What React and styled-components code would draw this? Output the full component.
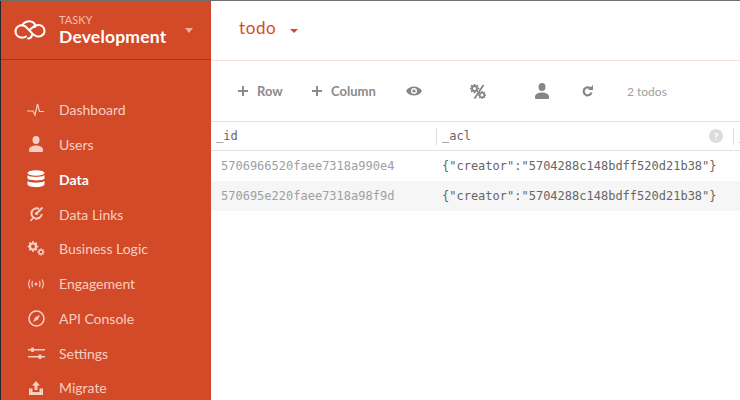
import React from 'react'
import styled, { createGlobalStyle } from 'styled-components'

const GlobalStyle = createGlobalStyle`
  html, body {
    margin: 0;
    padding: 0;
    background: #fff;
    font-family: "Lato", "Open Sans", sans-serif;
  }
`

const LogoIcon = () => (
  <svg width="32" height="20" viewBox="0 0 32 20" fill="none" stroke="#fff" strokeWidth="2" strokeLinecap="round">
    <path d="M12 16.500 C8 19 2 17 1.500 12 C1 7 6 4.500 9.500 5.500 C13 6.500 17 13.500 21 15.500 C25 18 30.500 15.500 30.500 11 C30.500 7 27 4.500 24 5 C21 5.500 18 7.500 15.500 10" />
    <path d="M8.500 5.500 C9.500 1.500 17 -0.500 20.500 3.500 L21 7" />
    <path d="M14 18.500 C16 18.500 17.500 17.500 18 15" />
  </svg>
)

const Pulse = () => (
  <svg width="18" height="14" viewBox="0 0 18 14" fill="none" stroke="currentColor" strokeWidth="1.200">
    <path d="M0 8 H6 L8 12 L10.500 1 L12.500 8.500 H17" />
  </svg>
)

const Person = ({ size = 14 }) => (
  <svg width={size} height={size * 1.15} viewBox="0 0 14 16" fill="currentColor">
    <ellipse cx="7" cy="4" rx="3.500" ry="4" />
    <path d="M1 16 C0 16 0 15 0 14 C0 11 3 9.500 7 9.500 C11 9.500 14 11 14 14 C14 15 14 16 13 16 Z" />
  </svg>
)

const Database = () => (
  <svg width="18" height="18" viewBox="0 0 18 18" fill="currentColor">
    <ellipse cx="9" cy="3" rx="8.500" ry="2.800" />
    <path d="M0.500 5 C2 7.500 16 7.500 17.500 5 V8.500 C16 11 2 11 0.500 8.500 Z" />
    <path d="M0.500 10.800 C2 13.300 16 13.300 17.500 10.800 V14.500 C16 18 2 18 0.500 14.500 Z" />
  </svg>
)

const LinkDial = () => (
  <svg width="15" height="16" viewBox="0 0 15 16" fill="none" stroke="currentColor" strokeWidth="2">
    <path d="M10 2.800 A5.200 5.200 0 1 0 12.800 8" />
    <path d="M7.500 7.500 L13.500 1.500" strokeWidth="2" />
    <path d="M4 12 L1.500 15" strokeWidth="1.600" />
    <circle cx="7.500" cy="7.500" r="1.600" fill="currentColor" stroke="none" />
  </svg>
)

const gearTeeth = (cx, cy, r) => {
  const teeth = [0, 45, 90, 135, 180, 225, 270, 315]
  return teeth.map((a) => {
    const x = cx + Math.cos((a * Math.PI) / 180) * r
    const y = cy + Math.sin((a * Math.PI) / 180) * r
    return <circle key={a} cx={x} cy={y} r={r * 0.24} />
  })
}

const Gears = () => (
  <svg width="18" height="15" viewBox="0 0 18 15" fill="currentColor">
    {gearTeeth(6, 5.500, 4.400)}
    <circle cx="6" cy="5.500" r="3" fill="none" stroke="currentColor" strokeWidth="2.200" />
    {gearTeeth(14, 11, 3)}
    <circle cx="14" cy="11" r="2" fill="none" stroke="currentColor" strokeWidth="1.500" />
  </svg>
)

const Signal = () => (
  <svg width="16" height="10" viewBox="0 0 16 10" fill="none" stroke="currentColor" strokeWidth="1.200">
    <path d="M2 0.500 C0.500 3 0.500 7 2 9.500" />
    <path d="M4.500 2 C3.700 4 3.700 6 4.500 8" />
    <path d="M11.500 2 C12.300 4 12.300 6 11.500 8" />
    <path d="M14 0.500 C15.500 3 15.500 7 14 9.500" />
    <circle cx="8" cy="5" r="1.500" fill="currentColor" stroke="none" />
  </svg>
)

const Compass = () => (
  <svg width="17" height="17" viewBox="0 0 17 17" fill="none" stroke="currentColor" strokeWidth="1.600">
    <circle cx="8.500" cy="8.500" r="7.500" />
    <path d="M12 5 L9.800 9.800 L5 12 L7.200 7.200 Z" fill="currentColor" stroke="none" />
  </svg>
)

const Sliders = () => (
  <svg width="17" height="13" viewBox="0 0 17 13" fill="currentColor">
    <rect x="0" y="2" width="17" height="1.500" />
    <rect x="3" y="0.500" width="3" height="4.500" rx="1" />
    <rect x="0" y="9" width="17" height="1.500" />
    <rect x="10.500" y="7.500" width="3" height="4.500" rx="1" />
  </svg>
)

const Upload = () => (
  <svg width="14" height="14" viewBox="0 0 14 14" fill="currentColor">
    <path d="M7 0 L11 4.500 H8.500 V9 H5.500 V4.500 H3 Z" />
    <path d="M0 7.500 H3.500 V11 H10.500 V7.500 H14 V14 H0 Z" />
  </svg>
)

const Plus = () => (
  <svg width="10" height="10" viewBox="0 0 10 10" fill="currentColor">
    <rect x="4" y="0" width="2" height="10" />
    <rect x="0" y="4" width="10" height="2" />
  </svg>
)

const Eye = () => (
  <svg width="16" height="10" viewBox="0 0 16 10" fill="currentColor">
    <path fillRule="evenodd" d="M0 5 C3 -1 13 -1 16 5 C13 11 3 11 0 5 Z M8 2 A3 3 0 1 0 8 8 A3 3 0 1 0 8 2 Z" />
    <circle cx="8" cy="5" r="1.600" />
  </svg>
)

const GearPercent = () => (
  <svg width="16" height="15" viewBox="0 0 16 15" fill="currentColor">
    {gearTeeth(4.500, 4.500, 4)}
    <circle cx="4.500" cy="4.500" r="2.500" fill="none" stroke="currentColor" strokeWidth="1.800" />
    <circle cx="12" cy="11" r="2.300" fill="none" stroke="currentColor" strokeWidth="1.600" />
    {gearTeeth(12, 11, 3.400)}
    <path d="M13.500 1 L4.500 14.500" stroke="currentColor" strokeWidth="1.800" />
  </svg>
)

const Refresh = () => (
  <svg width="11" height="12" viewBox="0 0 11 12" fill="none" stroke="currentColor" strokeWidth="2.200">
    <path d="M8.500 3.500 A4 4 0 1 0 9.500 7.500" />
    <path d="M6 5 H11 V0 Z" fill="currentColor" stroke="none" />
  </svg>
)

const navItems = [
  { label: 'Dashboard', icon: <Pulse /> },
  { label: 'Users', icon: <Person /> },
  { label: 'Data', icon: <Database />, active: true },
  { label: 'Data Links', icon: <LinkDial /> },
  { label: 'Business Logic', icon: <Gears /> },
  { label: 'Engagement', icon: <Signal /> },
  { label: 'API Console', icon: <Compass /> },
  { label: 'Settings', icon: <Sliders /> },
  { label: 'Migrate', icon: <Upload /> },
]

const acl = '{"creator":"5704288c148bdff520d21b38"}'

const rows = [
  { id: '5706966520faee7318a990e4', acl },
  { id: '570695e220faee7318a98f9d', acl },
]

export default function App() {
  return (
    <Page>
      <GlobalStyle />
      <Sidebar>
        <Brand>
          <LogoIcon />
          <BrandText>
            <AppName>TASKY</AppName>
            <EnvName>Development</EnvName>
          </BrandText>
          <BrandCaret />
        </Brand>
        <Nav>
          {navItems.map((item) => (
            <NavItem key={item.label} $active={item.active}>
              <NavIcon>{item.icon}</NavIcon>
              {item.label}
            </NavItem>
          ))}
        </Nav>
      </Sidebar>
      <Main>
        <TopBar>
          <Title>todo</Title>
          <TitleCaret />
        </TopBar>
        <Toolbar>
          <ToolButton $width={74}><Plus />Row</ToolButton>
          <ToolButton $width={94}><Plus />Column</ToolButton>
          <ToolIcon $width={64}><Eye /></ToolIcon>
          <ToolIcon $width={65}><GearPercent /></ToolIcon>
          <ToolIcon $width={47}><Person size={14} /></ToolIcon>
          <ToolIcon $width={45}><Refresh /></ToolIcon>
          <Count>2 todos</Count>
        </Toolbar>
        <HeadRow>
          <HeadCell $width={225}>_id</HeadCell>
          <HeadCell $width={297} $divider>
            _acl
            <HelpBadge>?</HelpBadge>
          </HeadCell>
          <HeadCell $divider>_</HeadCell>
        </HeadRow>
        {rows.map((row, i) => (
          <Row key={row.id} $striped={i % 2 === 1}>
            <IdCell>{row.id}</IdCell>
            <AclCell>{row.acl}</AclCell>
            <MoreCell>-</MoreCell>
          </Row>
        ))}
      </Main>
    </Page>
  )
}

const Page = styled.div`
  display: flex;
  width: 740px;
  height: 400px;
  overflow: hidden;
  border-top: 1px solid #6f6f6f;
  box-sizing: border-box;
`

const Sidebar = styled.aside`
  flex: none;
  width: 211px;
  height: 399px;
  box-sizing: border-box;
  background: #d34a28;
  border-left: 1px solid #22282c;
`

const Brand = styled.div`
  display: flex;
  align-items: center;
  height: 59px;
  padding-left: 13px;
  box-sizing: border-box;
  border-bottom: 1px solid #a23a1f;
  color: #fff;
`

const BrandText = styled.div`
  display: flex;
  flex-direction: column;
  margin-left: 13px;
  padding-top: 2px;
`

const AppName = styled.span`
  font-size: 11px;
  line-height: 12px;
  color: #f3bfae;
`

const EnvName = styled.span`
  font-size: 17.500px;
  line-height: 22px;
  font-weight: 700;
  letter-spacing: 0.200px;
  color: #fff;
`

const BrandCaret = styled.span`
  margin: 0 0 0 19px;
  border-left: 4.500px solid transparent;
  border-right: 4.500px solid transparent;
  border-top: 5px solid #f0b09c;
`

const Nav = styled.nav`
  display: flex;
  flex-direction: column;
  padding-top: 32.400px;
`

const NavItem = styled.a`
  display: flex;
  flex: none;
  align-items: center;
  height: 34.750px;
  font-size: 14px;
  font-weight: ${(p) => (p.$active ? 700 : 400)};
  color: ${(p) => (p.$active ? '#fff' : '#f6cfc2')};
`

const NavIcon = styled.span`
  display: flex;
  flex: none;
  align-items: center;
  justify-content: center;
  width: 20px;
  margin: 0 13px 0 25px;
`

const Main = styled.main`
  flex: 1;
  min-width: 0;
`

const TopBar = styled.header`
  display: flex;
  align-items: center;
  height: 60px;
  padding-left: 28px;
  box-sizing: border-box;
  border-bottom: 1px solid #f6e0dc;
`

const Title = styled.h1`
  margin: 0 0 7px;
  font-size: 17px;
  font-weight: 400;
  letter-spacing: 0.600px;
  color: #d9491f;
`

const TitleCaret = styled.span`
  margin-left: 14px;
  border-left: 4.500px solid transparent;
  border-right: 4.500px solid transparent;
  border-top: 4px solid #d9491f;
`

const Toolbar = styled.div`
  display: flex;
  align-items: center;
  height: 61px;
  padding-left: 27px;
  box-sizing: border-box;
  border-bottom: 1px solid #e2e2e2;
  color: #858585;
`

const ToolButton = styled.span`
  display: flex;
  flex: none;
  align-items: center;
  gap: 9px;
  width: ${(p) => p.$width}px;
  font-size: 13px;
  font-weight: 700;
  color: #8a8a8a;
`

const ToolIcon = styled.span`
  display: flex;
  flex: none;
  width: ${(p) => p.$width}px;
`

const Count = styled.span`
  font-size: 12px;
  color: #a0a0a0;
`

const HeadRow = styled.div`
  display: flex;
  align-items: center;
  height: 29px;
  box-sizing: border-box;
  border-bottom: 1px solid #e2e2e2;
`

const HeadCell = styled.div`
  display: flex;
  flex: none;
  align-items: center;
  justify-content: space-between;
  width: ${(p) => (p.$width ? `${p.$width}px` : 'auto')};
  height: 17px;
  padding: 0 ${(p) => (p.$width === 297 ? 10 : 0)}px 0 5px;
  box-sizing: border-box;
  border-left: ${(p) => (p.$divider ? '1px solid #d8dde6' : 'none')};
  font-family: "DejaVu Sans Mono", monospace;
  font-size: 12px;
  color: #666;
`

const HelpBadge = styled.span`
  display: flex;
  align-items: center;
  justify-content: center;
  width: 14px;
  height: 14px;
  border-radius: 50%;
  background: #dcdcdc;
  color: #fff;
  font-family: "Lato", sans-serif;
  font-size: 10px;
  font-weight: 900;
`

const Row = styled.div`
  display: flex;
  align-items: center;
  height: 30px;
  background: ${(p) => (p.$striped ? '#f6f6f6' : '#fff')};
  font-family: "DejaVu Sans Mono", monospace;
  font-size: 12px;
`

const IdCell = styled.div`
  flex: none;
  width: 225px;
  padding-left: 10px;
  box-sizing: border-box;
  color: #a0a0a0;
`

const AclCell = styled.div`
  flex: none;
  width: 297px;
  padding-left: 6px;
  box-sizing: border-box;
  color: #666;
`

const MoreCell = styled.div`
  padding-left: 5px;
  color: #777;
`
